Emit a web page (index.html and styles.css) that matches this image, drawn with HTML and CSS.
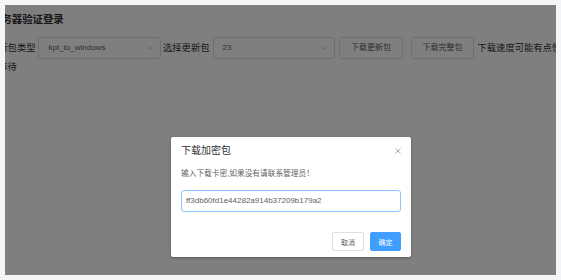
FILE: index.html
```html
<!DOCTYPE html>
<html>
<head>
<meta charset="utf-8">
<title>服务器验证登录</title>
<link rel="stylesheet" href="styles.css">
</head>
<body>

<div class="page">

<!-- contenu de la page ------------------------------------------------------>
<div class="content">
<h3 class="title">服务器验证登录</h3>
<div class="row"><span class="label">更新包类型</span><span class="select sel1"><span class="val">kpt_to_windows</span><svg class="arrow" width="6" height="4" viewBox="0 0 6 4"><polyline points="0.5,0.5 3,3 5.5,0.5" fill="none" stroke="#c0c4cc" stroke-width="0.8"/></svg></span><span class="label lab2">选择更新包</span><span class="select sel2"><span class="val">23</span><svg class="arrow" width="6" height="4" viewBox="0 0 6 4"><polyline points="0.5,0.5 3,3 5.5,0.5" fill="none" stroke="#c0c4cc" stroke-width="0.8"/></svg></span><span class="btn btn1">下载更新包</span><span class="btn btn2">下载完整包</span><span class="note">下载速度可能有点慢，请耐心等待</span></div>
</div>

<!-- masque + dialogue ------------------------------------------------------->
<div class="mask">
<div class="dialog">
<div class="dlg-head">
<span class="dlg-title">下载加密包</span>
<svg class="close" width="6" height="6" viewBox="0 0 6 6"><path d="M0.5 0.5L5.5 5.5M5.5 0.5L0.5 5.5" stroke="#909399" stroke-width="0.8"/></svg>
</div>
<div class="dlg-body">
<div class="msg">输入下载卡密,如果没有请联系管理员！</div>
<div class="input">ff3db60fd1e44282a914b37209b179a2</div>
</div>
<div class="dlg-foot">
<span class="dbtn cancel">取消</span>
<span class="dbtn ok">确定</span>
</div>
</div>
</div>

</div>

</body>
</html>
```

FILE: styles.css
```css
body {margin:0; padding:5px; background-color:#f4f5f7;
	font-family:"Liberation Sans","Noto Sans CJK SC",sans-serif; color:#303133;}

.page {position:relative; width:551px; height:270px; overflow:hidden; background-color:#fff;}

.content {margin-left:-16px; width:605px; padding-top:7px;}
.title {margin:0 0 9px 2px; font-size:10.4px; line-height:16px; font-weight:bold;}

.row {font-size:9.3px; line-height:14px;}
.label {vertical-align:middle;}
.lab2 {margin-left:2.5px;}

.select {display:inline-flex; align-items:center; justify-content:space-between; box-sizing:border-box;
	height:22px; padding:0 7px 0 10px; border:1px solid #dcdfe6; border-radius:3px;
	font-size:8px; color:#606266; vertical-align:middle;}
.sel1 {width:123px; margin-left:2px;}
.sel2 {width:122px; margin-left:3px; padding-left:9px;}
.arrow {display:block;}

.btn {display:inline-flex; align-items:center; justify-content:center; box-sizing:border-box;
	height:22px; border:1px solid #dcdfe6; border-radius:3px; font-size:8px; color:#606266;
	vertical-align:middle;}
.btn1 {width:64px; margin-left:4.5px;}
.btn2 {width:63px; margin-left:8px;}
.note {margin-left:3.5px; vertical-align:middle;}

.mask {position:absolute; left:0; top:0; right:0; bottom:0; background-color:rgba(0,0,0,.5);
	display:flex; align-items:flex-start; padding:132px 0 0 166px;}

.dialog {width:240px; background-color:#fff; border-radius:2px; box-shadow:0 1px 3px rgba(0,0,0,.3);}
.dlg-head {display:flex; align-items:center; justify-content:space-between; padding:7px 10px 0;
	line-height:14px;}
.dlg-title {font-size:10px; color:#303133;}
.close {display:block;}

.dlg-body {padding:10px 10px 0;}
.msg {font-size:7.7px; line-height:12px; color:#606266;}
.input {margin-top:10px; box-sizing:border-box; height:22px; line-height:20px; padding:0 4px;
	border:1px solid #8cc5ff; border-radius:3px; font-size:8px; color:#606266;}

.dlg-foot {display:flex; justify-content:flex-end; gap:6px; padding:20px 10px 6px;}
.dbtn {display:flex; align-items:center; justify-content:center; box-sizing:border-box;
	height:19px; border:1px solid #dcdfe6; border-radius:2px; font-size:7px;}
.cancel {width:32px; color:#606266; background-color:#fff;}
.ok {width:31px; color:#fff; background-color:#409eff; border-color:#409eff;}
```
